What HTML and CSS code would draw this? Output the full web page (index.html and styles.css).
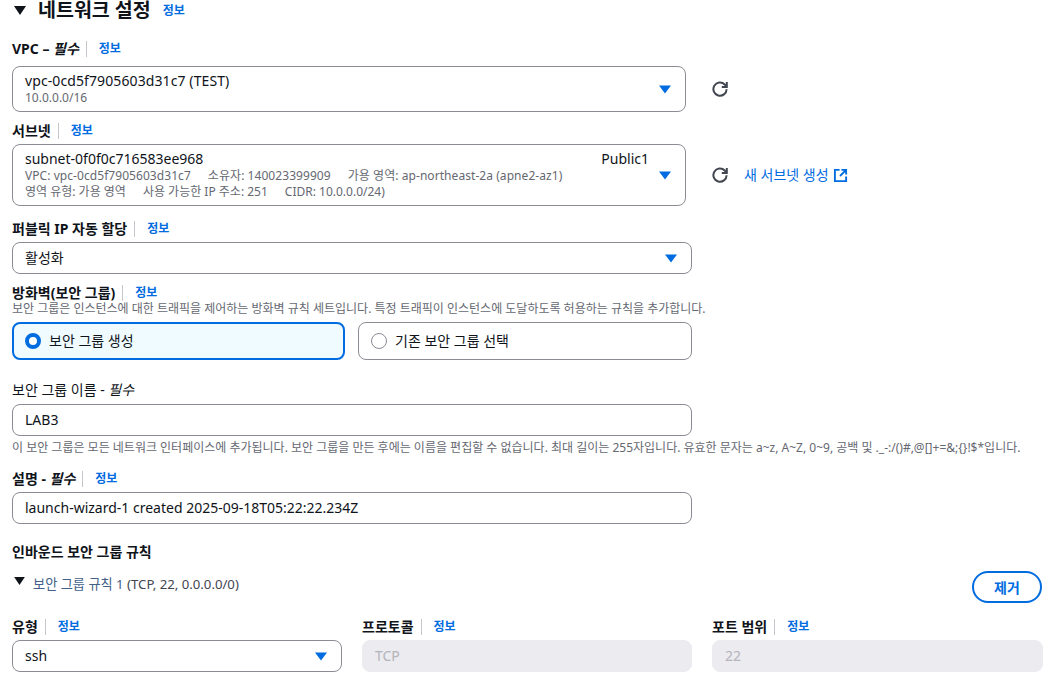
FILE: index.html
```html
<!DOCTYPE html>
<html lang="ko">
<head>
<meta charset="utf-8">
<title>네트워크 설정</title>
<link rel="stylesheet" href="styles.css">
</head>
<body>
<main class="page">
  <header class="section-head">
    <svg class="caret-dark big" viewBox="0 0 12 9"><path d="M0 0h12L6 9z"/></svg>
    <h1>네트워크 설정</h1>
    <a class="info">정보</a>
  </header>

  <div class="label l-vpc"><b>VPC – <i>필수</i></b><span class="sep"></span><a class="info">정보</a></div>
  <div class="select-row r-vpc">
    <div class="select s-vpc">
      <div class="main">vpc-0cd5f7905603d31c7 (TEST)</div>
      <div class="sub">10.0.0.0/16</div>
      <svg class="arrow" viewBox="0 1 12 8"><path d="M0 1h12L6 9z"/></svg>
    </div>
    <svg class="refresh" viewBox="0 0 16 16"><path d="M14.6 8.2A6.6 6.6 0 1 1 12.7 3.5L14.6 5.4"/><path d="M14.8 1v5h-5"/></svg>
  </div>

  <div class="label l-sub"><b>서브넷</b><span class="sep"></span><a class="info">정보</a></div>
  <div class="select-row r-sub">
    <div class="select s-sub">
      <div class="main split"><span>subnet-0f0f0c716583ee968</span><span class="tag">Public1</span></div>
      <div class="sub sub-a">VPC: vpc-0cd5f7905603d31c7<span class="gap"></span>소유자: 140023399909<span class="gap"></span>가용 영역: ap-northeast-2a (apne2-az1)</div>
      <div class="sub">영역 유형: 가용 영역<span class="gap"></span>사용 가능한 IP 주소: 251<span class="gap"></span>CIDR: 10.0.0.0/24)</div>
      <svg class="arrow" viewBox="0 1 12 8"><path d="M0 1h12L6 9z"/></svg>
    </div>
    <svg class="refresh" viewBox="0 0 16 16"><path d="M14.6 8.2A6.6 6.6 0 1 1 12.7 3.5L14.6 5.4"/><path d="M14.8 1v5h-5"/></svg>
    <a class="new-link">새 서브넷 생성
      <svg class="ext" viewBox="0 0 16 16"><path d="M7 2H2v12h12V9"/><path d="M9 2h5v5M14 2 7.5 8.5"/></svg>
    </a>
  </div>

  <div class="label l-pub"><b>퍼블릭 IP 자동 할당</b><span class="sep"></span><a class="info">정보</a></div>
  <div class="select s-one wide">
    <div class="main">활성화</div>
    <svg class="arrow" viewBox="0 1 12 8"><path d="M0 1h12L6 9z"/></svg>
  </div>

  <div class="label l-fw"><b>방화벽(보안 그룹)</b><span class="sep"></span><a class="info">정보</a></div>
  <p class="desc d-fw">보안 그룹은 인스턴스에 대한 트래픽을 제어하는 방화벽 규칙 세트입니다. 특정 트래픽이 인스턴스에 도달하도록 허용하는 규칙을 추가합니다.</p>
  <div class="tiles">
    <div class="tile on"><span class="radio"></span>보안 그룹 생성</div>
    <div class="tile"><span class="radio"></span>기존 보안 그룹 선택</div>
  </div>

  <div class="label l-name"><span>보안 그룹 이름 - <i>필수</i></span></div>
  <div class="input wide">LAB3</div>
  <p class="desc d-name">이 보안 그룹은 모든 네트워크 인터페이스에 추가됩니다. 보안 그룹을 만든 후에는 이름을 편집할 수 없습니다. 최대 길이는 255자입니다. 유효한 문자는 a~z, A~Z, 0~9, 공백 및 ._-:/()#,@[]+=&amp;;{}!$*입니다.</p>

  <div class="label l-desc"><b>설명 - <i>필수</i></b><span class="sep"></span><a class="info">정보</a></div>
  <div class="input wide">launch-wizard-1 created 2025-09-18T05:22:22.234Z</div>

  <h2>인바운드 보안 그룹 규칙</h2>
  <div class="rule-head">
    <div class="rule-title">
      <svg class="caret-dark small" viewBox="0 0 12 9"><path d="M0 0h12L6 9z"/></svg>
      <span><span class="blueish">보안 그룹 규칙 1</span> (TCP, 22, 0.0.0.0/0)</span>
    </div>
    <button class="remove">제거</button>
  </div>

  <div class="cols">
    <div class="col">
      <div class="label"><b>유형</b><span class="sep"></span><a class="info">정보</a></div>
      <div class="select s-one">
        <div class="main">ssh</div>
        <svg class="arrow" viewBox="0 1 12 8"><path d="M0 1h12L6 9z"/></svg>
      </div>
    </div>
    <div class="col">
      <div class="label"><b>프로토콜</b><span class="sep"></span><a class="info">정보</a></div>
      <div class="input disabled">TCP</div>
    </div>
    <div class="col">
      <div class="label"><b>포트 범위</b><span class="sep"></span><a class="info">정보</a></div>
      <div class="input disabled">22</div>
    </div>
  </div>
</main>
</body>
</html>
```

FILE: styles.css
```css
* { box-sizing: border-box; }
html, body { margin: 0; padding: 0; height: 691px; overflow: hidden; background: #fff; }
body {
  font-family: "Noto Sans", "Noto Sans CJK KR", sans-serif;
  font-size: 14px;
  line-height: 20px;
  color: #0f141a;
}
.page { padding: 0 11px 0 12px; }
.section-head { display: flex; align-items: center; height: 20px; }
.section-head h1 { margin: 0 0 0 12px; font-size: 19.5px; font-weight: 700; line-height: 18px; }
.section-head .info { margin: 2px 0 0 12px; }
.caret-dark { fill: #0f141a; flex: none; }
.big { width: 12px; height: 9px; margin-left: 2px; }
.small { width: 11px; height: 8px; margin: 0 8px 0 2px; position: relative; top: -3px; }
.info { color: #006ce0; font-size: 12px; font-weight: 700; line-height: 16px; }
.label { display: flex; align-items: center; height: 16px; padding-top: 2px; font-size: 14px; line-height: 16px; }
.label b { font-weight: 700; }
.sep { width: 1px; height: 16px; background: #c6c6cd; margin: 0 12px 0 7px; flex: none; }
.l-vpc { margin-top: 20px; }
.l-sub { margin-top: 10px; }
.l-pub { margin-top: 14px; }
.l-fw { margin-top: 10px; }
.l-name { margin-top: 22px; padding-top: 0; }
.l-desc { margin-top: 15px; }
.select-row { display: flex; align-items: center; }
.r-vpc { margin-top: 10px; }
.r-sub { margin-top: 6px; }
.select {
  position: relative;
  border: 1px solid #8c8c94;
  border-radius: 8px;
  padding: 0 12px;
  background: #fff;
}
.s-vpc, .s-sub { width: 674px; flex: none; padding-top: 4px; }
.s-vpc { height: 46px; }
.s-sub { height: 62px; }
.s-one { height: 32px; padding-top: 5px; margin-top: 6px; }
.wide { width: 680px; }
.main { font-size: 14px; line-height: 20px; }
.s-vpc .main { letter-spacing: .1px; }
.split { display: flex; justify-content: space-between; padding-right: 24px; }
.sub { font-size: 12px; line-height: 16px; color: #656871; white-space: nowrap; }
.sub-a { letter-spacing: .06px; }
.main + .sub { margin-top: -1px; }
.gap { display: inline-block; width: 17px; }
.arrow { position: absolute; right: 14px; top: 50%; width: 12px; height: 9px; margin-top: -4.5px; fill: #006ce0; }
.refresh { width: 16px; height: 16px; margin-left: 26px; fill: none; stroke: #424650; stroke-width: 2; flex: none; }
.new-link { display: inline-flex; align-items: center; margin-left: 16px; color: #006ce0; font-size: 14px; }
.ext { width: 15px; height: 15px; margin-left: 4px; fill: none; stroke: #006ce0; stroke-width: 2; }
.desc { margin: 0; font-size: 12px; line-height: 14px; color: #656871; white-space: nowrap; }
.d-fw { margin-top: 2px; }
.d-name { margin-top: 5px; }
.tiles { display: grid; grid-template-columns: 333px 334px; gap: 13px; width: 680px; margin-top: 6px; }
.tile {
  display: flex;
  align-items: center;
  height: 38px;
  padding-left: 12px;
  border: 1px solid #8c8c94;
  border-radius: 8px;
  font-size: 14px;
}
.tile.on { border: 2px solid #006ce0; background: #f0fbff; padding-left: 11px; }
.radio {
  width: 16px; height: 16px; border-radius: 50%;
  border: 1.5px solid #8c8c94; background: #fff; margin-right: 8px; flex: none;
}
.tile.on .radio { border: 4.5px solid #006ce0; }
.input {
  height: 32px;
  margin-top: 6px;
  padding: 5px 12px;
  border: 1px solid #8c8c94;
  border-radius: 8px;
  font-size: 14px;
}
.input.disabled { border-color: #ebebf0; background: #ebebf0; color: #b4b4bb; }
h2 { margin: 18px 0 0; font-size: 14px; font-weight: 700; line-height: 20px; }
.rule-head { display: flex; justify-content: space-between; align-items: center; height: 32px; margin-top: 9px; }
.rule-title { display: flex; align-items: center; font-size: 13.2px; color: #424650; margin-top: -6px; }
.blueish { color: #42608a; }
.remove {
  width: 70px; height: 32px; margin-right: 1px;
  border: 2px solid #006ce0; border-radius: 16px; background: #fff;
  color: #006ce0; font: 700 14px "Noto Sans", "Noto Sans CJK KR", sans-serif;
}
.cols { display: grid; grid-template-columns: 330px 330px 331px; gap: 20px; margin-top: 15px; }
```
